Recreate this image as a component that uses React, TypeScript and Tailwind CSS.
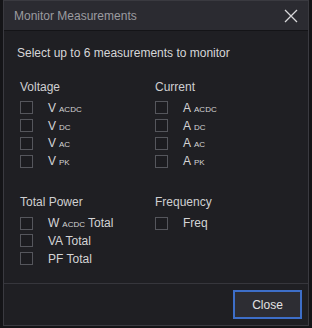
import React from 'react';

type Item = { main: string; sub?: string; tail?: string };

const voltage: Item[] = [
  { main: 'V', sub: 'ACDC' },
  { main: 'V', sub: 'DC' },
  { main: 'V', sub: 'AC' },
  { main: 'V', sub: 'PK' },
];

const current: Item[] = [
  { main: 'A', sub: 'ACDC' },
  { main: 'A', sub: 'DC' },
  { main: 'A', sub: 'AC' },
  { main: 'A', sub: 'PK' },
];

const power: Item[] = [
  { main: 'W', sub: 'ACDC', tail: 'Total' },
  { main: 'VA Total' },
  { main: 'PF Total' },
];

const freq: Item[] = [{ main: 'Freq' }];

function Row({ item }: { item: Item }) {
  return (
    <label className="flex items-center h-[17.8px]">
      <span className="w-[13px] h-[13px] border border-[#55565c] bg-[#1c1c20] shrink-0" />
      <span className="ml-[15px] text-[12px] leading-none text-[#d4d4d6]">
        {item.main}
        {item.sub && <span className="ml-[3px] text-[8px]">{item.sub}</span>}
        {item.tail && <span className="ml-[3px]">{item.tail}</span>}
      </span>
    </label>
  );
}

function Group({ title, items }: { title: string; items: Item[] }) {
  return (
    <div className="flex flex-col">
      <div className="text-[12px] leading-none text-[#cfcfd1] h-[15px] mb-[3px]">{title}</div>
      {items.map((it, i) => (
        <Row key={i} item={it} />
      ))}
    </div>
  );
}

export default function App() {
  return (
    <div
      className="w-[312px] h-[328px] bg-[#141417] pl-[3px] pr-[3px]"
      style={{ fontFamily: '"Liberation Sans", Arial, sans-serif' }}
    >
      <div className="w-[306px] h-[326px] border border-[#3a3a40] bg-[#1f1f23] flex flex-col">
        <div className="h-[30px] bg-[#2b2b31] border-b border-[#141417] flex items-center justify-between pl-[10px] pr-[10px] shrink-0">
          <span className="text-[12px] text-[#9b9ba0]">Monitor Measurements</span>
          <svg width="14" height="14" viewBox="0 0 14 14" className="text-[#d8d8da]">
            <path d="M1 1 L13 13 M13 1 L1 13" stroke="currentColor" strokeWidth="1.3" />
          </svg>
        </div>
        <div className="flex-1 px-[16px] pt-[16px]">
          <div className="text-[12px] leading-none text-[#d6d6d8] -ml-[3px]">Select up to 6 measurements to monitor</div>
          <div className="grid grid-cols-[135px_1fr] mt-[22px] gap-y-[26px]">
            <Group title="Voltage" items={voltage} />
            <Group title="Current" items={current} />
            <Group title="Total Power" items={power} />
            <Group title="Frequency" items={freq} />
          </div>
        </div>
        <div className="h-[42px] border-t border-[#36363c] flex items-start justify-end pt-[6px] pr-[6px] shrink-0">
          <button className="w-[69px] h-[29px] border-2 border-[#3d6ec8] bg-[#2d2d33] text-[12px] text-[#e2e2e4]">
            Close
          </button>
        </div>
      </div>
    </div>
  );
}
